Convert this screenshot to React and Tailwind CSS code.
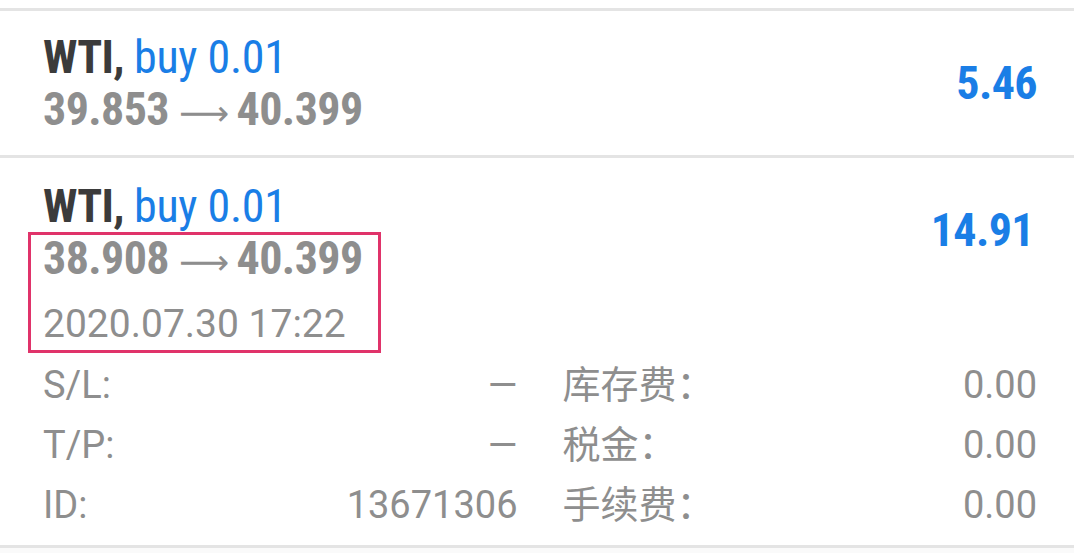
const positions = [
  { id: 1, open: '39.853', close: '40.399', profit: '5.46' },
];

const details = [
  ['S/L:', '—', '库存费：', '0.00'],
  ['T/P:', '—', '税金：', '0.00'],
  ['ID:', '13671306', '手续费：', '0.00'],
];

const Head = ({ open, close }) => (
  <div className="flex flex-col font-bold text-[46px] leading-[52px] tracking-[-0.6px] [font-family:'Roboto_Condensed',Roboto,sans-serif]">
    <div>
      <span className="text-[#3b3b3b]">WTI,</span>{' '}
      <span className="text-[#1a7ee6] font-normal tracking-[-0.3px]">buy 0.01</span>
    </div>
    <div className="h-[52px] flex items-baseline text-[#8e8e8e]">
      <span>{open}</span>
      <span className="ml-[10px] mr-[8px] font-normal text-[35px] leading-none [font-family:'DejaVu_Sans',sans-serif]">⟶</span>
      <span>{close}</span>
    </div>
  </div>
);

export default function App() {
  return (
    <div className="w-[1074px] h-[553px] overflow-hidden bg-[#fafafa] [font-family:Roboto,'Noto_Sans_CJK_SC',sans-serif]">
      <div className="h-[8px] bg-white" />
      <div className="border-t-[3px] border-b-[3px] border-[#e4e4e4] bg-white">
        {positions.map((p) => (
          <div key={p.id} className="flex items-center justify-between pl-[43px] pr-[37px] pt-[20px] pb-[20px]">
            <Head open={p.open} close={p.close} />
            <div className="text-[46px] font-bold tracking-[-0.6px] text-[#1a7ee6] [font-family:'Roboto_Condensed',Roboto,sans-serif]">{p.profit}</div>
          </div>
        ))}
      </div>
      <div className="relative border-b-[3px] border-[#e4e4e4] bg-white pl-[43px] pr-[37px] pt-[22px] pb-[10px]">
        <div className="flex items-center justify-between">
          <Head open="38.908" close="40.399" />
          <div className="pr-[3px] pb-[4px] text-[46px] font-bold tracking-[-0.6px] text-[#1a7ee6] [font-family:'Roboto_Condensed',Roboto,sans-serif]">14.91</div>
        </div>
        <div className="mt-[18px] text-[39px] leading-[44px] text-[#8e8e8e]">2020.07.30 17:22</div>
        <div className="mt-[9px] grid grid-cols-2 gap-x-[45px] text-[38px] leading-[60px] text-[#8e8e8e]">
          {details.map((r) => (
            <div key={r[0]} className="contents">
              <div className="flex justify-between">
                <span>{r[0]}</span>
                <span>{r[1]}</span>
              </div>
              <div className="flex justify-between">
                <span>{r[2]}</span>
                <span>{r[3]}</span>
              </div>
            </div>
          ))}
        </div>
        <div className="absolute left-[28px] top-[74px] w-[353px] h-[121px] border-[3px] border-[#e0336a] pointer-events-none" />
      </div>
    </div>
  );
}
